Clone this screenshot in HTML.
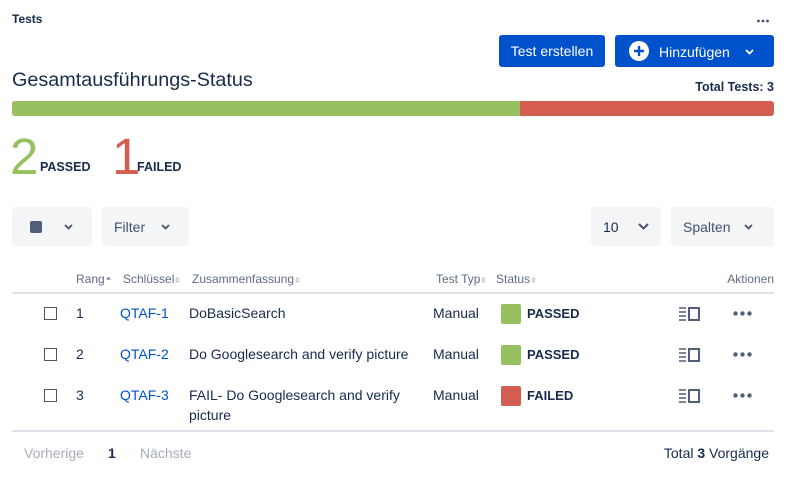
<!DOCTYPE html>
<html><head><meta charset="utf-8"><style>
*{margin:0;padding:0;box-sizing:border-box}
body{width:798px;height:485px;background:#fff;font-family:"Liberation Sans","DejaVu Sans",sans-serif;color:#172b4d;position:relative;overflow:hidden}
.a{position:absolute;white-space:nowrap}
.btn{position:absolute;background:#0052cc;color:#fff;border-radius:3px;font-size:14px;display:flex;align-items:center}
.gb{position:absolute;background:#f4f5f7;border-radius:3px;font-size:14px;color:#42526e;display:flex;align-items:center}
.h{font-size:12px;color:#5e6c84}
.s{display:inline-block;width:5px;height:8px;vertical-align:middle;margin-left:1px}
.cb{position:absolute;width:13px;height:13px;border:1px solid #555;left:44px}
.t{font-size:14px;color:#172b4d}
.k{font-size:14px;color:#0052cc}
.sq{position:absolute;width:20px;height:20px;border-radius:2px;left:501px}
.st{font-size:13px;font-weight:bold;color:#172b4d}
</style></head><body>
<div class="a" style="left:12px;top:12px;font-size:12px;font-weight:bold;color:#172b4d">Tests</div>
<svg class="a" style="left:757px;top:19px" width="12" height="4" viewBox="0 0 12 4"><circle cx="1.5" cy="2" r="1.4" fill="#42526e"/><circle cx="6" cy="2" r="1.4" fill="#42526e"/><circle cx="10.5" cy="2" r="1.4" fill="#42526e"/></svg>
<div class="btn" style="left:499px;top:35px;width:106px;height:32px;justify-content:center">Test erstellen</div>
<div class="btn" style="left:615px;top:35px;width:159px;height:32px">
 <svg style="position:absolute;left:14px;top:6px" width="20" height="20" viewBox="0 0 20 20"><circle cx="10" cy="10" r="10" fill="#fff"/><path d="M10 5v10M5 10h10" stroke="#0052cc" stroke-width="2.4"/></svg>
 <span style="position:absolute;left:44px;top:9px">Hinzufügen</span>
 <svg style="position:absolute;left:130px;top:14px" width="9" height="6" viewBox="0 0 9 6"><path d="M1 1l3.5 3.5L8 1" stroke="#fff" stroke-width="1.8" fill="none"/></svg>
</div>
<div class="a" style="left:12px;top:69px;font-size:19.8px;color:#172b4d">Gesamtausführungs-Status</div>
<div class="a" style="right:24px;top:80px;font-size:12.5px;font-weight:bold">Total Tests: 3</div>
<div class="a" style="left:12px;top:101px;width:762px;height:15px;border-radius:3px;overflow:hidden;background:#d45d52"><div style="width:508px;height:15px;background:#97c160"></div></div>
<div class="a" style="left:10px;top:131px;font-size:51px;line-height:51px;color:#97c160;font-weight:300">2</div>
<div class="a" style="left:40px;top:160px;font-size:12.5px;font-weight:bold">PASSED</div>
<div class="a" style="left:112px;top:131px;font-size:51px;line-height:51px;color:#d45d52">1</div>
<div class="a" style="left:137px;top:160px;font-size:12.5px;font-weight:bold">FAILED</div>

<div class="gb" style="left:12px;top:207px;width:80px;height:39px">
 <div style="position:absolute;left:18px;top:14px;width:12px;height:12px;border-radius:2px;background:#505f79"></div>
 <svg style="position:absolute;left:52px;top:17px" width="9" height="6" viewBox="0 0 9 6"><path d="M1 1l3.5 3.5L8 1" stroke="#42526e" stroke-width="1.8" fill="none"/></svg>
</div>
<div class="gb" style="left:102px;top:207px;width:87px;height:39px">
 <span style="position:absolute;left:12px;top:12px">Filter</span>
 <svg style="position:absolute;left:59px;top:17px" width="9" height="6" viewBox="0 0 9 6"><path d="M1 1l3.5 3.5L8 1" stroke="#42526e" stroke-width="1.8" fill="none"/></svg>
</div>
<div class="gb" style="left:591px;top:207px;width:70px;height:39px">
 <span style="position:absolute;left:12px;top:12px;color:#172b4d">10</span>
 <svg style="position:absolute;left:47px;top:16px" width="11" height="7" viewBox="0 0 11 7"><path d="M1 1l4.5 4.5L10 1" stroke="#42526e" stroke-width="2" fill="none"/></svg>
</div>
<div class="gb" style="left:671px;top:207px;width:103px;height:39px">
 <span style="position:absolute;left:12px;top:12px">Spalten</span>
 <svg style="position:absolute;left:73px;top:17px" width="9" height="6" viewBox="0 0 9 6"><path d="M1 1l3.5 3.5L8 1" stroke="#42526e" stroke-width="1.8" fill="none"/></svg>
</div>

<div class="a h" style="left:76px;top:272px">Rang<svg class="s" viewBox="0 0 5 8"><path d="M0 3.5L2.5 1 5 3.5z" fill="#5e6c84"/></svg></div>
<div class="a h" style="left:123px;top:272px">Schlüssel<svg class="s" viewBox="0 0 5 8"><path d="M0 3.5L2.5 1 5 3.5zM0 4.5L2.5 7 5 4.5z" fill="#c1c7d0"/></svg></div>
<div class="a h" style="left:192px;top:272px">Zusammenfassung<svg class="s" viewBox="0 0 5 8"><path d="M0 3.5L2.5 1 5 3.5zM0 4.5L2.5 7 5 4.5z" fill="#c1c7d0"/></svg></div>
<div class="a h" style="left:436px;top:272px">Test Typ<svg class="s" viewBox="0 0 5 8"><path d="M0 3.5L2.5 1 5 3.5zM0 4.5L2.5 7 5 4.5z" fill="#c1c7d0"/></svg></div>
<div class="a h" style="left:496px;top:272px">Status<svg class="s" viewBox="0 0 5 8"><path d="M0 3.5L2.5 1 5 3.5zM0 4.5L2.5 7 5 4.5z" fill="#c1c7d0"/></svg></div>
<div class="a h" style="right:24px;top:272px">Aktionen</div>
<div class="a" style="left:12px;top:292px;width:762px;height:2px;background:#dfe1e6"></div>

<div class="cb" style="top:307px"></div>
<div class="a t" style="left:76px;top:305px">1</div>
<div class="a k" style="left:120px;top:305px">QTAF-1</div>
<div class="a t" style="left:189px;top:305px">DoBasicSearch</div>
<div class="a t" style="left:433px;top:305px">Manual</div>
<div class="sq" style="top:304px;background:#97c160"></div>
<div class="a st" style="left:527px;top:306px">PASSED</div>

<div class="cb" style="top:348px"></div>
<div class="a t" style="left:76px;top:346px">2</div>
<div class="a k" style="left:120px;top:346px">QTAF-2</div>
<div class="a t" style="left:189px;top:346px">Do Googlesearch and verify picture</div>
<div class="a t" style="left:433px;top:346px">Manual</div>
<div class="sq" style="top:345px;background:#97c160"></div>
<div class="a st" style="left:527px;top:347px">PASSED</div>

<div class="cb" style="top:389px"></div>
<div class="a t" style="left:76px;top:387px">3</div>
<div class="a k" style="left:120px;top:387px">QTAF-3</div>
<div class="a t" style="left:189px;line-height:20px;top:385px">FAIL- Do Googlesearch and verify<br>picture</div>
<div class="a t" style="left:433px;top:387px">Manual</div>
<div class="sq" style="top:386px;background:#d45d52"></div>
<div class="a st" style="left:527px;top:388px">FAILED</div>

<svg class="a" style="left:679px;top:307px" width="21" height="14" viewBox="0 0 21 14"><path d="M0 1h7M0 5h7M0 9h7M0 13h7" stroke="#505f79" stroke-width="1.6"/><rect x="10" y="1" width="10" height="12" fill="none" stroke="#505f79" stroke-width="2"/></svg>
<svg class="a" style="left:679px;top:348px" width="21" height="14" viewBox="0 0 21 14"><path d="M0 1h7M0 5h7M0 9h7M0 13h7" stroke="#505f79" stroke-width="1.6"/><rect x="10" y="1" width="10" height="12" fill="none" stroke="#505f79" stroke-width="2"/></svg>
<svg class="a" style="left:679px;top:389px" width="21" height="14" viewBox="0 0 21 14"><path d="M0 1h7M0 5h7M0 9h7M0 13h7" stroke="#505f79" stroke-width="1.6"/><rect x="10" y="1" width="10" height="12" fill="none" stroke="#505f79" stroke-width="2"/></svg>
<svg class="a" style="left:733px;top:311px" width="19" height="5" viewBox="0 0 19 5"><circle cx="2.5" cy="2.5" r="2.2" fill="#505f79"/><circle cx="9.5" cy="2.5" r="2.2" fill="#505f79"/><circle cx="16.5" cy="2.5" r="2.2" fill="#505f79"/></svg>
<svg class="a" style="left:733px;top:352px" width="19" height="5" viewBox="0 0 19 5"><circle cx="2.5" cy="2.5" r="2.2" fill="#505f79"/><circle cx="9.5" cy="2.5" r="2.2" fill="#505f79"/><circle cx="16.5" cy="2.5" r="2.2" fill="#505f79"/></svg>
<svg class="a" style="left:733px;top:393px" width="19" height="5" viewBox="0 0 19 5"><circle cx="2.5" cy="2.5" r="2.2" fill="#505f79"/><circle cx="9.5" cy="2.5" r="2.2" fill="#505f79"/><circle cx="16.5" cy="2.5" r="2.2" fill="#505f79"/></svg>

<div class="a" style="left:12px;top:430px;width:762px;height:2px;background:#dfe1e6"></div>
<div class="a" style="left:24px;top:445px;font-size:14px;color:#a5adba">Vorherige</div>
<div class="a" style="left:108px;top:445px;font-size:14px;font-weight:bold;color:#172b4d">1</div>
<div class="a" style="left:140px;top:445px;font-size:14px;color:#a5adba">Nächste</div>
<div class="a" style="right:29px;top:445px;font-size:14px;color:#172b4d">Total <b>3</b> Vorgänge</div>
</body></html>
